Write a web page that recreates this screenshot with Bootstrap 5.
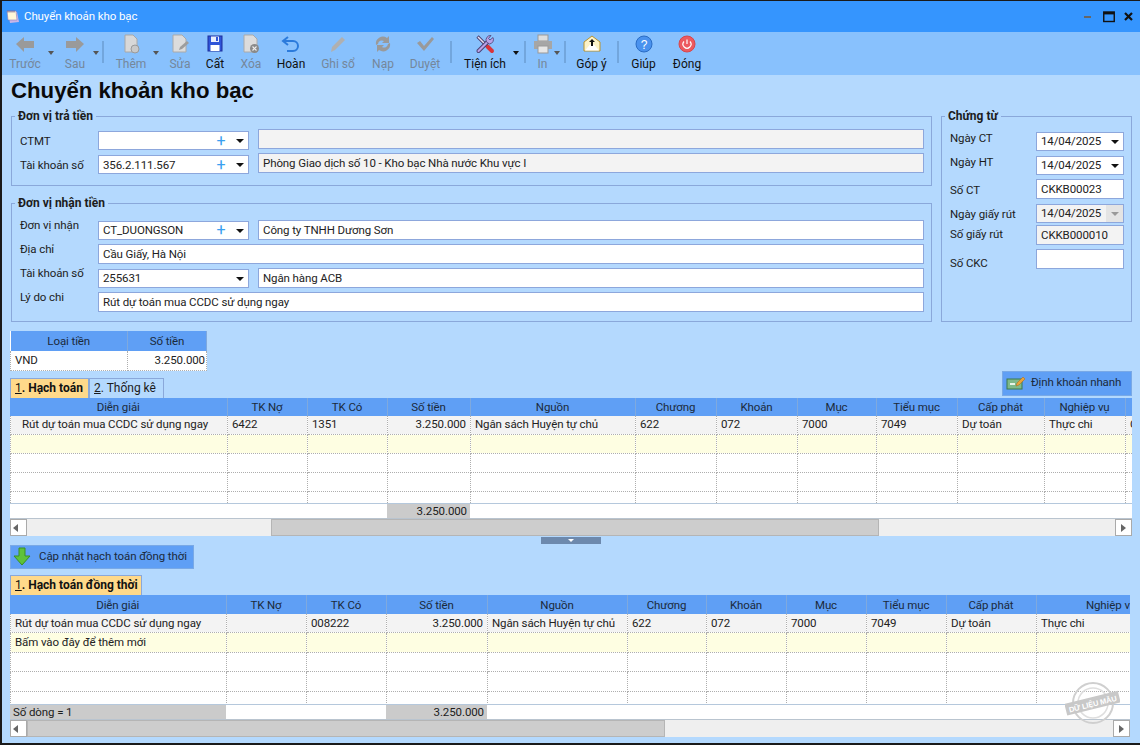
<!DOCTYPE html>
<html lang="vi">
<head>
<meta charset="UTF-8">
<title>Chuyển khoản kho bạc</title>
<link href="https://cdn.jsdelivr.net/npm/bootstrap@5.3.2/dist/css/bootstrap.min.css" rel="stylesheet">
<style>
html, body { height: 100%; }
body {
    margin: 0;
    background: #b4d9fe;
    font-family: Roboto, "Liberation Sans", sans-serif;
    font-size: 11.5px;
    letter-spacing: -.1px;
    line-height: 1.2;
    color: #1c1c1c;
    overflow: hidden;
}
.win { width: 1140px; height: 745px; border: 1px solid #1a1a1a; border-width: 1px 0 2px 2px; background: #b4d9fe; overflow: hidden; }

/* title bar */
.titlebar { height: 31px; background: #3595fe; color: #fff; padding: 0 5px 0 3px; }
.titlebar .ttl { margin-left: 3px; }
.winbtn { width: 12px; height: 12px; color: #111; }

/* toolbar */
.toolbar { height: 43px; background: #88c1fd; padding-left: 4px; font-size: 12px; letter-spacing: 0; }
.tb { display: flex; flex-direction: column; align-items: center; justify-content: flex-start; height: 43px; padding-top: 2px; color: #111; flex: none; }
.tb svg { width: 20px; height: 20px; display: block; }
.tb span { margin-top: 3px; white-space: nowrap; }
.tb.off { color: #75879b; }
.w34 { width: 34px; } .w36 { width: 36px; } .w38 { width: 38px; } .w42 { width: 42px; } .w45 { width: 45px; }
.w46 { width: 46px; } .w47 { width: 47px; } .w52 { width: 52px; }
.pl6 { padding-left: 6px; width: 44px; }
.pl6b { padding-left: 6px; width: 56px; }
.pl5 { padding-left: 5px; width: 24px; }
.caret { flex: none; width: 12px; height: 43px; position: relative; }
.caret.thin { width: 8px; }
.caret.wide { width: 14px; }
.caret.short { width: 10px; }
.caret::after { content: ""; position: absolute; left: 50%; margin-left: -3px; top: 19px; border: 3px solid transparent; border-top: 4px solid #555; border-bottom: 0; }
.caret.dark::after { border-top-color: #111; }
.sep { flex: none; width: 6px; display: flex; justify-content: center; padding-top: 9px; }
.sep i { display: block; width: 2px; height: 22px; background: #72a6dd; }

/* heading */
h1.page-title { font-family: "Liberation Sans", Arial, sans-serif; font-size: 22.2px; letter-spacing: 0; font-weight: 700; color: #0a0a0a; margin: 0; padding: 3px 0 0 9px; height: 41px; line-height: 26px; }

/* groups */
fieldset.grp { border: 1px solid #8aa8da; margin: 0; padding: 0 7px 0 8px; min-width: 0; position: relative; }
fieldset.grp legend { position: absolute; left: 3px; top: -8px; float: none; width: auto; margin: 0; padding: 0 3px; background: #b4d9fe; font-size: 12px; letter-spacing: 0; font-weight: 700; line-height: 14px; }
.top { padding: 0 8px 0 9px; gap: 9px; }
.left { width: 921px; flex: none; }
fieldset.g1 { height: 70px; margin-bottom: 17px; padding-top: 12px; }
fieldset.g2 { height: 119px; padding-top: 16px; }
fieldset.g3 { width: 191px; height: 206px; padding-top: 14px; flex: none; }
.frow { display: flex; align-items: center; }
.lab { width: 78px; flex: none; white-space: nowrap; }
.lab3 { width: 86px; flex: none; white-space: nowrap; }
.fld { border: 1px solid #8da7dc; background: #fff; padding: 1px 4px 0; height: 20px; display: flex; align-items: center; white-space: nowrap; color: #222; }
.fld.gray { background: #f3f3f3; }
.combo, .date { padding-top: 0; padding-right: 0; }
.val { padding-top: 2px; }
.combo { width: 151px; height: 19px; flex: none; margin-right: 9px; position: relative; }
.combo .val { flex: 1; }
.combo .plus { color: #3aa0f0; font-size: 16px; width: 20px; text-align: center; line-height: 1; }
.drop { width: 17px; flex: none; height: 100%; position: relative; }
.drop::after { content: ""; position: absolute; left: 5px; top: 7px; border: 4px solid transparent; border-top: 4px solid #111; border-bottom: 0; }
.drop.off { background: #e4e4e4; }
.drop.off::after { border-top-color: #999; }
.grow { flex: 1; min-width: 0; }
.date { width: 88px; flex: none; height: 19px; }
.date .val { flex: 1; }
.txt3 { width: 88px; flex: none; }
.g1 .frow { height: 21px; margin-bottom: 3px; }
.g1 .combo { align-self: flex-end; }
.g1 .val { padding-top: 3px; }
.g1 .fld.grow { align-self: flex-start; }
.g1 .lab { margin-top: 4px; }
.g2 .frow { height: 20px; margin-bottom: 4px; }
.g2 .lab { margin-top: -9px; }
.g3 .frow { height: 20px; margin-bottom: 4px; }
.g3 .frow.tight { margin-bottom: 2px; }
.g3 .up { margin-top: -4px; }
.g3 .dn { margin-top: 4px; }
.g3 .dn2 { margin-top: 10px; }

/* tables */
.money { width: 196px; margin: 9px 0 0 8px; }
table.grid { table-layout: fixed; border-collapse: collapse; margin: 0; background: #fff; }
table.grid th { background: #5f9ff5; color: #1b2a3b; font-weight: 400; text-align: center; border: 0; border-right: 1px solid #7fa9de; padding: 4px 0 0; white-space: nowrap; overflow: hidden; }
table.grid td { border: 1px dotted #aeaeae; border-top: 0; padding: 2px 4px 0; white-space: nowrap; overflow: hidden; color: #222; background: transparent; }
table.grid tr.sel td { background: #f3f3f3; }
table.grid tr.new td { background: #fefee2; }
.money th { height: 20px; }
.money td { height: 19px; }
.money table.grid { width: 196px; }
.money .grid td { padding: 3px 1px 0 4px; }
.c-a { width: 117px; } .c-b { width: 79px; }
.tabrow { height: 27px; padding: 0 8px 0 8px; margin-top: 0; }
.tab { height: 20px; padding: 0 4px; display: flex; align-items: center; border: 1px solid #8aa8da; border-bottom: 0; white-space: nowrap; font-size: 12px; letter-spacing: 0; }
.tab.on { background: #ffd98a; font-weight: 700; color: #111; }
.tab u { font-weight: 400; }
.t1 { width: 79px; } .t2 { width: 75px; }
.btnq { background: #5f9ff5; border: 1px solid #79a9e6; color: #1b2a3b; height: 25px; display: flex; align-items: center; white-space: nowrap; }
.quick { width: 130px; padding-left: 3px; gap: 5px; margin-bottom: 2px; }
.gridbox { margin: 0 8px 0 8px; background: #fff; overflow: hidden; position: relative; }
.gb2 { margin-right: 10px; }
.gridbox table.grid th { height: 18px; padding-top: 3px; }
.gb2 table.grid th { height: 19px; padding-top: 4px; }
.gb1 .rows { height: 87px; overflow: hidden; }
.gb2 .rows { height: 90px; overflow: hidden; }
.gb1 table.grid { width: 1301px; }
.gb2 table.grid { width: 1341px; }
.gb1 td { height: 19px; }
.gb2 td { height: 19.4px; padding-top: 3px !important; }
.gb1 td:first-child { padding-left: 11px; }
.foot { height: 15px; border-top: 1px solid #b5c8dc; display: flex; align-items: stretch; }
.foot div { flex: none; padding: 0 3px; line-height: 14px; }
.foot .g { background: #cbcbcb; }
.fs1 { width: 377px; }
.fa1 { width: 83px; text-align: right; }
.fl2 { width: 216px; }
.fb2 { width: 160px; }
.fa2 { width: 101px; text-align: right; }
.sb { height: 18px; background: #efefef; border-top: 1px solid #b9c4cf; display: flex; align-items: stretch; }
.sb b { flex: none; width: 17px; background: #fff; border: 1px solid #aaa; position: relative; }
.sb b::after { content: ""; position: absolute; top: 4px; border: 4px solid transparent; }
.sb b.l::after { left: 2px; border-right: 5px solid #666; border-left: 0; }
.sb b.r::after { left: 5px; border-left: 5px solid #666; border-right: 0; }
.sb .track { flex: 1; min-width: 0; display: flex; }
.sb .thumb { background: #cdcdcd; border: 1px solid #b5b5b5; }
.splitter { height: 9px; display: flex; justify-content: center; }
.splitter div { margin-top: 1px; width: 60px; height: 7px; background: #6d89ad; position: relative; }
.splitter div::after { content: ""; position: absolute; left: 27px; top: 2px; border: 3px solid transparent; border-top: 3px solid #fff; border-bottom: 0; }
.update { width: 184px; margin-left: 8px; gap: 8px; padding-left: 2px; height: 24px; }
.tab2 { margin: 6px 0 0 8px; width: 132px; }
.stamp { position: absolute; right: 10px; bottom: 12px; width: 55px; height: 44px; pointer-events: none; }
.stamp svg { display: block; width: 55px; height: 44px; }
</style>
</head>
<body>
<div class="win">
    <div class="titlebar d-flex align-items-center">
        <svg width="16" height="16" viewBox="0 0 16 16"><path d="M3 3h9l2 10-9 1z" fill="#c9b6e8"/><path d="M2 2h9l1 9H3z" fill="#fff7d8" stroke="#8d7cb8" stroke-width=".6"/><path d="M3 1.500v2M5 1.500v2M7 1.500v2M9 1.500v2" stroke="#6b5d8c"/></svg>
        <span class="ttl">Chuyển khoản kho bạc</span>
        <div class="ms-auto d-flex align-items-center gap-2">
            <svg class="winbtn" viewBox="0 0 12 12"><rect x="1" y="5" width="7" height="2" fill="#666"/></svg>
            <svg class="winbtn" viewBox="0 0 12 12"><rect x=".75" y="1" width="10.500" height="9.500" fill="none" stroke="#111" stroke-width="1.400"/><rect x="1" y="1" width="10" height="2.400" fill="#111"/></svg>
            <svg class="winbtn" viewBox="0 0 12 12"><path d="M2 2l7 7M9 2l-7 7" stroke="#111" stroke-width="2.200"/></svg>
        </div>
    </div>

    <div class="toolbar d-flex">
        <div class="tb off w38"><svg viewBox="0 0 20 20"><path d="M1 10l8-7v4h10v7H9v4z" fill="#9a9a9a"/></svg><span>Trước</span></div>
        <div class="caret wide"></div>
        <div class="tb off w34"><svg viewBox="0 0 20 20"><path d="M19 10l-8-7v4H1v7h10v4z" fill="#9a9a9a"/></svg><span>Sau</span></div>
        <div class="caret thin"></div>
        <div class="sep"><i></i></div>
        <div class="tb off pl6"><svg viewBox="0 0 20 20"><path d="M4 1h8l4 4v13H4z" fill="#d8d8d8" stroke="#a8a8a8"/><circle cx="14" cy="15" r="4" fill="#c9c9c9" stroke="#9a9a9a"/></svg><span>Thêm</span></div>
        <div class="caret"></div>
        <div class="tb off w36"><svg viewBox="0 0 20 20"><path d="M3 1h9l4 4v13H3z" fill="#dcdcdc" stroke="#aaa"/><path d="M9 16l1-3 7-6 2 2-7 6z" fill="#9d9d9d"/></svg><span>Sửa</span></div>
        <div class="tb w34"><svg viewBox="0 0 20 20"><rect x="3" y="2" width="14" height="15" fill="#2f55d8" stroke="#1c2f9c"/><rect x="6" y="2.500" width="8" height="5.500" fill="#e9eefc"/><rect x="11" y="3" width="2" height="4" fill="#2f55d8"/><rect x="5.500" y="11" width="9" height="6" fill="#fff"/></svg><span>Cất</span></div>
        <div class="tb off w38"><svg viewBox="0 0 20 20"><path d="M3 1h9l4 4v13H3z" fill="#dcdcdc" stroke="#aaa"/><circle cx="13.500" cy="14.500" r="4.500" fill="#8a8a8a"/><path d="M11.500 12.500l4 4M15.500 12.500l-4 4" stroke="#eee" stroke-width="1.200"/></svg><span>Xóa</span></div>
        <div class="tb w42"><svg viewBox="0 0 20 20"><path d="M7 3L2 7l5 4" fill="none" stroke="#2b7bdc" stroke-width="2"/><path d="M3 7h9a4.500 4.500 0 010 10H6" fill="none" stroke="#2b7bdc" stroke-width="2"/></svg><span>Hoàn</span></div>
        <div class="tb off w52"><svg viewBox="0 0 20 20"><path d="M3 18l1-5L14 3l3 3L7 16z" fill="#b0b0b0"/></svg><span>Ghi sổ</span></div>
        <div class="tb off w38"><svg viewBox="0 0 20 20"><path d="M3 11a7 7 0 0111-7l2-2v7h-7l2-2a4 4 0 00-6 3z" fill="#9a9a9a"/><path d="M17 9a7 7 0 01-11 7l-2 2v-7h7l-2 2a4 4 0 006-3z" fill="#9a9a9a"/></svg><span>Nạp</span></div>
        <div class="tb off w46"><svg viewBox="0 0 20 20"><path d="M2 9l3-2 4 5L17 3l2 2-10 12z" fill="#9a9a9a"/></svg><span>Duyệt</span></div>
        <div class="sep"><i></i></div>
        <div class="tb pl6b"><svg viewBox="0 0 20 20"><path d="M2.500 2.500l12 12" stroke="#4a3f72" stroke-width="3.200"/><path d="M3 3l11 11" stroke="#e8e4f4" stroke-width="1.400"/><path d="M12.500 12.500l4.500 4.500" stroke="#d9343a" stroke-width="4" stroke-linecap="round"/><path d="M3.500 17L13 7.500" stroke="#4a3f72" stroke-width="4" stroke-linecap="round"/><path d="M3.500 17L13 7.500" stroke="#b9a3e8" stroke-width="2.200" stroke-linecap="round"/><path d="M18 3.500l-3 2.500-1.500-1.500 2.500-3a4.500 4.500 0 00-4.500 6.500l3 2a4.500 4.500 0 003.500-6.500z" fill="#b9a3e8" stroke="#4a3f72" stroke-width=".8"/></svg><span>Tiện ích</span></div>
        <div class="caret dark"></div>
        <div class="sep"><i></i></div>
        <div class="tb off pl5"><svg viewBox="0 0 20 20"><rect x="5" y="1" width="10" height="6" fill="#dedede" stroke="#999"/><rect x="1" y="7" width="18" height="8" fill="#a6a6a6"/><rect x="5" y="12" width="10" height="7" fill="#e6e6e6" stroke="#999"/></svg><span>In</span></div>
        <div class="caret short"></div>
        <div class="sep"><i></i></div>
        <div class="tb w47"><svg viewBox="0 0 20 20"><path d="M2 8l8-6 8 6v9H2z" fill="#fdf3c8" stroke="#b8932f" stroke-width="1"/><path d="M3 16.500l5-6h4l5 6z" fill="#fff"/><path d="M10 5l3 3h-2v4H9V8H7z" fill="#111"/></svg><span>Góp ý</span></div>
        <div class="sep"><i></i></div>
        <div class="tb w45"><svg viewBox="0 0 20 20"><circle cx="10" cy="10" r="8" fill="#4a92ee" stroke="#2a6cc4"/><text x="10" y="14.500" text-anchor="middle" font-size="12" fill="#fff" font-family="Liberation Sans">?</text></svg><span>Giúp</span></div>
        <div class="tb w42"><svg viewBox="0 0 20 20"><circle cx="10" cy="10" r="8" fill="#ec5a5f" stroke="#d8464b"/><path d="M7 7.500a4 4 0 106 0" fill="none" stroke="#fff" stroke-width="1.200"/><path d="M10 5.500v4.500" stroke="#fff" stroke-width="1.200"/></svg><span>Đóng</span></div>
    </div>

    <h1 class="page-title">Chuyển khoản kho bạc</h1>

    <div class="top d-flex">
        <div class="left">
            <fieldset class="grp g1">
                <legend>Đơn vị trả tiền</legend>
                <div class="frow">
                    <div class="lab">CTMT</div>
                    <div class="fld combo"><span class="val"></span><span class="plus">+</span><span class="drop"></span></div>
                    <div class="fld gray grow"></div>
                </div>
                <div class="frow">
                    <div class="lab">Tài khoản số</div>
                    <div class="fld combo"><span class="val">356.2.111.567</span><span class="plus">+</span><span class="drop"></span></div>
                    <div class="fld gray grow">Phòng Giao dịch số 10 - Kho bạc Nhà nước Khu vực I</div>
                </div>
            </fieldset>
            <fieldset class="grp g2">
                <legend>Đơn vị nhận tiền</legend>
                <div class="frow">
                    <div class="lab">Đơn vị nhận</div>
                    <div class="fld combo"><span class="val">CT_DUONGSON</span><span class="plus">+</span><span class="drop"></span></div>
                    <div class="fld grow">Công ty TNHH Dương Sơn</div>
                </div>
                <div class="frow">
                    <div class="lab">Địa chỉ</div>
                    <div class="fld grow">Cầu Giấy, Hà Nội</div>
                </div>
                <div class="frow">
                    <div class="lab">Tài khoản số</div>
                    <div class="fld combo"><span class="val">255631</span><span class="drop"></span></div>
                    <div class="fld grow">Ngân hàng ACB</div>
                </div>
                <div class="frow">
                    <div class="lab">Lý do chi</div>
                    <div class="fld grow">Rút dự toán mua CCDC sử dụng ngay</div>
                </div>
            </fieldset>
        </div>
        <fieldset class="grp g3">
            <legend>Chứng từ</legend>
            <div class="frow"><div class="lab3 up">Ngày CT</div><div class="fld date"><span class="val">14/04/2025</span><span class="drop"></span></div></div>
            <div class="frow"><div class="lab3 up">Ngày HT</div><div class="fld date"><span class="val">14/04/2025</span><span class="drop"></span></div></div>
            <div class="frow"><div class="lab3 dn">Số CT</div><div class="fld txt3">CKKB00023</div></div>
            <div class="frow tight"><div class="lab3 dn">Ngày giấy rút</div><div class="fld date gray"><span class="val">14/04/2025</span><span class="drop off"></span></div></div>
            <div class="frow"><div class="lab3">Số giấy rút</div><div class="fld txt3 gray">CKKB000010</div></div>
            <div class="frow"><div class="lab3 dn2">Số CKC</div><div class="fld txt3"></div></div>
        </fieldset>
    </div>

    <div class="money">
        <table class="table grid">
            <colgroup><col class="c-a"><col class="c-b"></colgroup>
            <tr><th>Loại tiền</th><th>Số tiền</th></tr>
            <tr><td>VND</td><td class="text-end">3.250.000</td></tr>
        </table>
    </div>

    <div class="tabrow d-flex align-items-end justify-content-between">
        <div class="d-flex">
            <div class="tab on t1"><span><u>1</u>. Hạch toán</span></div>
            <div class="tab t2"><span><u>2</u>. Thống kê</span></div>
        </div>
        <div class="btnq quick">
            <svg width="20" height="16" viewBox="0 0 20 16"><rect x="1" y="4" width="15" height="10" fill="#7fb98a" stroke="#3d7a4c"/><rect x="4" y="8" width="5" height="2" fill="#e8f4e8"/><path d="M10 11l1-3 6-6 2 2-6 6z" fill="#e8a33b" stroke="#a5651a" stroke-width=".5"/></svg>
            <span>Định khoản nhanh</span>
        </div>
    </div>

    <div class="gridbox gb1">
        <table class="table grid">
            <colgroup>
                <col style="width:217px"><col style="width:80px"><col style="width:80px"><col style="width:83px"><col style="width:165px"><col style="width:81px"><col style="width:81px"><col style="width:79px"><col style="width:81px"><col style="width:87px"><col style="width:81px"><col style="width:186px">
            </colgroup>
            <tr><th>Diễn giải</th><th>TK Nợ</th><th>TK Có</th><th>Số tiền</th><th>Nguồn</th><th>Chương</th><th>Khoản</th><th>Mục</th><th>Tiểu mục</th><th>Cấp phát</th><th>Nghiệp vụ</th><th></th></tr>
        </table>
        <div class="rows">
            <table class="table grid">
                <colgroup>
                    <col style="width:217px"><col style="width:80px"><col style="width:80px"><col style="width:83px"><col style="width:165px"><col style="width:81px"><col style="width:81px"><col style="width:79px"><col style="width:81px"><col style="width:87px"><col style="width:81px"><col style="width:186px">
                </colgroup>
                <tr class="sel"><td>Rút dự toán mua CCDC sử dụng ngay</td><td>6422</td><td>1351</td><td class="text-end">3.250.000</td><td>Ngân sách Huyện tự chủ</td><td>622</td><td>072</td><td>7000</td><td>7049</td><td>Dự toán</td><td>Thực chi</td><td>C</td></tr>
                <tr class="new"><td></td><td></td><td></td><td></td><td></td><td></td><td></td><td></td><td></td><td></td><td></td><td></td></tr>
                <tr><td></td><td></td><td></td><td></td><td></td><td></td><td></td><td></td><td></td><td></td><td></td><td></td></tr>
                <tr><td></td><td></td><td></td><td></td><td></td><td></td><td></td><td></td><td></td><td></td><td></td><td></td></tr>
                <tr><td></td><td></td><td></td><td></td><td></td><td></td><td></td><td></td><td></td><td></td><td></td><td></td></tr>
            </table>
        </div>
        <div class="foot">
            <div class="fs1"></div>
            <div class="g fa1">3.250.000</div>
        </div>
        <div class="sb">
            <b class="l"></b>
            <div class="track"><div class="thumb" style="margin-left:244px;width:608px"></div></div>
            <b class="r"></b>
        </div>
    </div>

    <div class="splitter"><div></div></div>

    <div class="btnq update">
        <svg width="18" height="19" viewBox="0 0 18 19"><path d="M6 1h6v8h5l-8 9-8-9h5z" fill="#5fc23a" stroke="#3a8f22"/></svg>
        <span>Cập nhật hạch toán đồng thời</span>
    </div>

    <div class="tab on tab2"><span><u>1</u>. Hạch toán đồng thời</span></div>

    <div class="gridbox gb2">
        <table class="table grid">
            <colgroup>
                <col style="width:216px"><col style="width:80px"><col style="width:80px"><col style="width:101px"><col style="width:140px"><col style="width:79px"><col style="width:80px"><col style="width:80px"><col style="width:80px"><col style="width:90px"><col style="width:150px"><col style="width:165px">
            </colgroup>
            <tr><th>Diễn giải</th><th>TK Nợ</th><th>TK Có</th><th>Số tiền</th><th>Nguồn</th><th>Chương</th><th>Khoản</th><th>Mục</th><th>Tiểu mục</th><th>Cấp phát</th><th>Nghiệp vụ</th><th></th></tr>
        </table>
        <div class="rows">
            <table class="table grid">
                <colgroup>
                    <col style="width:216px"><col style="width:80px"><col style="width:80px"><col style="width:101px"><col style="width:140px"><col style="width:79px"><col style="width:80px"><col style="width:80px"><col style="width:80px"><col style="width:90px"><col style="width:150px"><col style="width:165px">
                </colgroup>
                <tr class="sel"><td>Rút dự toán mua CCDC sử dụng ngay</td><td></td><td>008222</td><td class="text-end">3.250.000</td><td>Ngân sách Huyện tự chủ</td><td>622</td><td>072</td><td>7000</td><td>7049</td><td>Dự toán</td><td>Thực chi</td><td></td></tr>
                <tr class="new"><td>Bấm vào đây để thêm mới</td><td></td><td></td><td></td><td></td><td></td><td></td><td></td><td></td><td></td><td></td><td></td></tr>
                <tr><td></td><td></td><td></td><td></td><td></td><td></td><td></td><td></td><td></td><td></td><td></td><td></td></tr>
                <tr><td></td><td></td><td></td><td></td><td></td><td></td><td></td><td></td><td></td><td></td><td></td><td></td></tr>
                <tr><td></td><td></td><td></td><td></td><td></td><td></td><td></td><td></td><td></td><td></td><td></td><td></td></tr>
            </table>
        </div>
        <div class="foot">
            <div class="g fl2">Số dòng = 1</div>
            <div class="fb2"></div>
            <div class="g fa2">3.250.000</div>
        </div>
        <div class="sb">
            <b class="l"></b>
            <div class="track"><div class="thumb" style="margin-left:0;width:638px"></div></div>
            <b class="r"></b>
        </div>
        <div class="stamp">
            <svg viewBox="0 0 55 44">
                <circle cx="28" cy="22" r="20" fill="none" stroke="#cfcfcf" stroke-width="2"/>
                <circle cx="28" cy="22" r="15" fill="none" stroke="#dedede" stroke-width="1.500"/>
                <g transform="rotate(-14 28 22)">
                    <rect x="0" y="16" width="55" height="12" fill="#c8c8c8"/>
                    <text x="27.500" y="25.500" text-anchor="middle" font-size="7.500" font-weight="700" fill="#fff" font-family="Liberation Sans">DỮ LIỆU MẪU</text>
                </g>
            </svg>
        </div>
    </div>
</div>
</body>
</html>
